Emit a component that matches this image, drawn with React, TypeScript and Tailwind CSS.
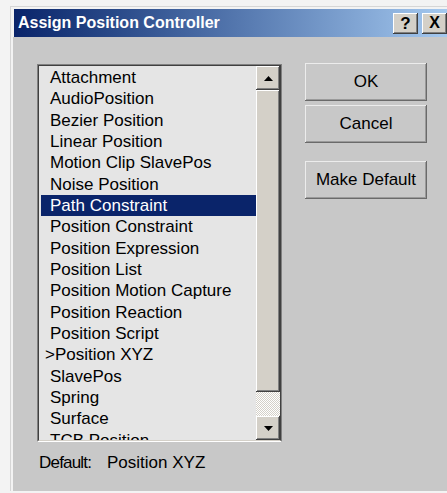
const controllers = [
  'Attachment',
  'AudioPosition',
  'Bezier Position',
  'Linear Position',
  'Motion Clip SlavePos',
  'Noise Position',
  'Path Constraint',
  'Position Constraint',
  'Position Expression',
  'Position List',
  'Position Motion Capture',
  'Position Reaction',
  'Position Script',
  '>Position XYZ',
  'SlavePos',
  'Spring',
  'Surface',
  'TCB Position',
]

const selected = 'Path Constraint'

// classic 3d raised edge
const raised =
  'shadow-[inset_-1px_-1px_#404040,inset_1px_1px_#ffffff,inset_-2px_-2px_#808080,inset_2px_2px_#d4d0c8]'

function TitleBar() {
  return (
    <div className="ml-[1px] flex h-[28px] w-[435px] items-center bg-gradient-to-r from-[#0a246a] to-[#a6caf0] pl-[4px] pr-[2px]">
      <span className="text-[16px] font-bold text-white">Assign Position Controller</span>
      <div className="ml-auto flex gap-[4px]">
        <div
          className={`flex h-[21px] w-[25px] items-center justify-center bg-[#d4d0c8] text-[17px] font-bold leading-none text-black ${raised}`}
        >
          ?
        </div>
        <div
          className={`flex h-[21px] w-[25px] items-center justify-center bg-[#d4d0c8] text-[16px] font-bold leading-none text-black ${raised}`}
        >
          X
        </div>
      </div>
    </div>
  )
}

function Arrow({ up }: { up?: boolean }) {
  return (
    <svg width="9" height="5" viewBox="0 0 9 5">
      {up ? <path d="M4.5 0 L9 5 L0 5 Z" fill="#000" /> : <path d="M0 0 L9 0 L4.5 5 Z" fill="#000" />}
    </svg>
  )
}

function ScrollBar() {
  return (
    <div className="flex w-[24px] flex-col bg-[#d4d0c8]">
      <div className={`flex h-[24px] items-center justify-center bg-[#d4d0c8] ${raised}`}>
        <Arrow up />
      </div>
      <div className={`h-[302px] bg-[#d4d0c8] ${raised}`} />
      <div className="flex-1 bg-[repeating-conic-gradient(#ffffff_0_25%,#d4d0c8_0_50%)] bg-[length:2px_2px]" />
      <div className={`flex h-[24px] items-center justify-center bg-[#d4d0c8] ${raised}`}>
        <Arrow />
      </div>
    </div>
  )
}

function ListBox() {
  return (
    <div className="h-[378px] w-[245px] border border-b-white border-l-[#808080] border-r-[#808080] border-t-[#808080]">
      <div className="flex h-full border border-b-[#d4d0c8] border-l-[#404040] border-r-[#404040] border-t-[#404040]">
        <div className="flex-1 overflow-hidden bg-[#e5e5e5] pl-[2px] pt-[1px]">
          {controllers.map((name) => (
            <div
              key={name}
              className={`h-[21.33px] whitespace-nowrap text-[17px] leading-[21px] ${
                name === selected ? 'bg-[#0a246a] text-white' : 'text-black'
              } ${name.startsWith('>') ? 'pl-[4px]' : 'pl-[9px]'}`}
            >
              {name}
            </div>
          ))}
        </div>
        <ScrollBar />
      </div>
    </div>
  )
}

function DialogButton({ label, className = '' }: { label: string; className?: string }) {
  return (
    <div
      className={`flex h-[38px] w-[122px] items-center justify-center bg-[#c8c8c8] text-[17px] text-black shadow-[inset_-1px_-1px_#6a6a6a,inset_1px_1px_#ececec,inset_-2px_-2px_#9a9a9a] ${className}`}
    >
      {label}
    </div>
  )
}

export default function App() {
  return (
    <div className="h-[493px] w-[447px] overflow-hidden bg-[#f3f3f3] pl-[10px] pt-[6px] font-['Liberation_Sans',Arial,sans-serif]">
      <div className="flex h-[485px] w-[460px] flex-col border-l border-t border-[#d6d6d6] pl-[2px] pt-[2px]">
        <TitleBar />
        <div className="flex flex-1 flex-col bg-[#c8c8c8] pl-[24px] pt-[27px]">
          <div className="flex gap-[23px]">
            <ListBox />
            <div className="-mt-[1px] flex flex-col">
              <DialogButton label="OK" />
              <DialogButton label="Cancel" className="mt-[4px]" />
              <DialogButton label="Make Default" className="mt-[18px]" />
            </div>
          </div>
          <div className="mt-[11px] flex pl-[2px] text-[17px] leading-[20px] text-black">
            <span className="w-[68px] tracking-[-0.8px]">Default:</span>
            <span>Position XYZ</span>
          </div>
        </div>
      </div>
    </div>
  )
}
